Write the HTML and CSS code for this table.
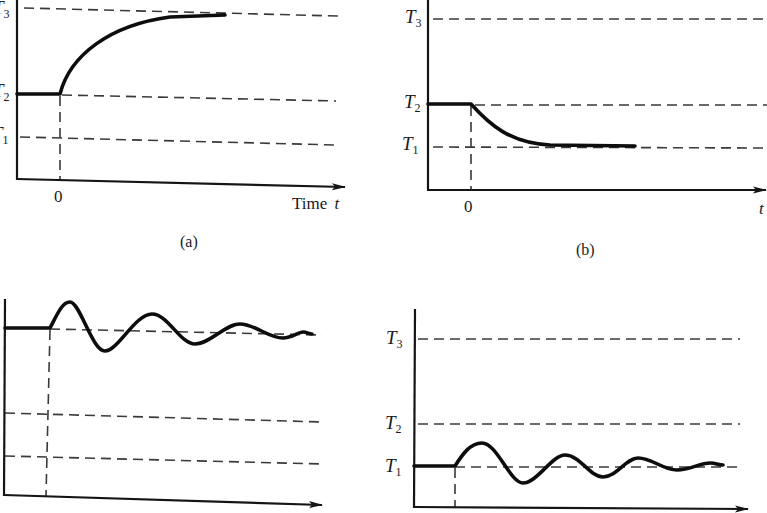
FILE: index.html
```
<!DOCTYPE html>
<html lang="en">
<head>
<meta charset="utf-8">
<title>Temperature response curves</title>
<link rel="stylesheet" href="styles.css">
</head>
<body>
<div class="figure">
<svg class="plot" viewBox="0 0 767 513" width="767" height="513" xmlns="http://www.w3.org/2000/svg">
  <defs>
    <marker id="arrow" markerWidth="14" markerHeight="8" refX="13" refY="4" orient="auto" markerUnits="userSpaceOnUse">
      <path d="M0,0.5 L14,4 L0,7.5 L3,4 Z" class="arrowhead"/>
    </marker>
  </defs>

  <!-- Panel (a) -->
  <g class="panel">
    <line class="dash" x1="24" y1="8" x2="338" y2="16"/>
    <line class="dash" x1="62" y1="95" x2="336" y2="101"/>
    <line class="dash" x1="20" y1="137" x2="336" y2="145"/>
    <line class="dash" x1="60" y1="96" x2="60" y2="179"/>
    <line class="axis" x1="17" y1="0" x2="17" y2="180"/>
    <line class="axis" x1="17" y1="179" x2="345" y2="187" marker-end="url(#arrow)"/>
    <path class="curve" d="M17,94 L60,94 C70,55 110,25 170,17 L225,15"/>
    <text class="lbl" x="-7" y="14">T<tspan class="sub" dy="4">3</tspan></text>
    <text class="lbl" x="-7" y="97">T<tspan class="sub" dy="4">2</tspan></text>
    <text class="lbl" x="-8" y="140">T<tspan class="sub" dy="4">1</tspan></text>
    <text class="num" x="54" y="202">0</text>
    <text class="num" x="292" y="209">Time <tspan class="it" dx="3">t</tspan></text>
    <text class="cap" x="180" y="247">(a)</text>
  </g>

  <!-- Panel (b) -->
  <g class="panel">
    <line class="dash" x1="433" y1="19" x2="767" y2="19"/>
    <line class="dash" x1="475" y1="105" x2="767" y2="105"/>
    <line class="dash" x1="433" y1="147" x2="767" y2="148"/>
    <line class="dash" x1="471" y1="106" x2="471" y2="190"/>
    <line class="axis" x1="428" y1="0" x2="428" y2="191"/>
    <line class="axis" x1="428" y1="190" x2="766" y2="190" marker-end="url(#arrow)"/>
    <path class="curve" d="M428,104 L471,104 C490,125 510,143 550,145 L635,146"/>
    <text class="lbl" x="405" y="23">T<tspan class="sub" dy="4">3</tspan></text>
    <text class="lbl" x="404" y="108">T<tspan class="sub" dy="4">2</tspan></text>
    <text class="lbl" x="402" y="150">T<tspan class="sub" dy="4">1</tspan></text>
    <text class="num" x="464" y="212">0</text>
    <text class="num it" x="759" y="214">t</text>
    <text class="cap" x="576" y="255">(b)</text>
  </g>

  <!-- Panel (c) -->
  <g class="panel">
    <line class="dash" x1="50" y1="329" x2="322" y2="335"/>
    <line class="dash" x1="5" y1="413" x2="322" y2="422"/>
    <line class="dash" x1="5" y1="456" x2="322" y2="464"/>
    <line class="dash" x1="50" y1="330" x2="46" y2="496"/>
    <line class="axis" x1="5" y1="299" x2="4" y2="496"/>
    <line class="axis" x1="4" y1="495" x2="322" y2="505" marker-end="url(#arrow)"/>
    <path class="curve" d="M5,328 L50,328 C57,315 62,302 70,302 C80,302 92,351 105,351 C118,351 135,314 152,314 C168,314 180,344 195,344 C210,344 225,324 240,324 C255,324 268,338 283,338 C292,338 298,332 303,332 C307,332 309,334 312,334"/>
    <text class="num" x="41" y="524">0</text>
  </g>

  <!-- Panel (d) -->
  <g class="panel">
    <line class="dash" x1="418" y1="339" x2="740" y2="339"/>
    <line class="dash" x1="418" y1="424" x2="740" y2="424"/>
    <line class="dash" x1="455" y1="467" x2="740" y2="467"/>
    <line class="dash" x1="455" y1="468" x2="455" y2="507"/>
    <line class="axis" x1="415" y1="309" x2="414" y2="508"/>
    <line class="axis" x1="414" y1="507" x2="748" y2="509" marker-end="url(#arrow)"/>
    <path class="curve" d="M414,466 L455,466 C462,455 470,443 482,443 C497,443 510,483 523,483 C537,483 552,455 565,455 C580,455 590,477 603,477 C617,477 626,458 638,458 C652,458 663,470 677,470 C690,470 700,463 710,463 C716,463 719,465 723,465"/>
    <text class="lbl" x="386" y="344">T<tspan class="sub" dy="4">3</tspan></text>
    <text class="lbl" x="385" y="429">T<tspan class="sub" dy="4">2</tspan></text>
    <text class="lbl" x="385" y="472">T<tspan class="sub" dy="4">1</tspan></text>
  </g>
</svg>
</div>
</body>
</html>
```
FILE: styles.css
```
html, body {
  margin: 0;
  padding: 0;
  background: #ffffff;
}

.figure {
  width: 767px;
  height: 513px;
  overflow: hidden;
}

.plot {
  display: block;
  font-family: "Liberation Serif", "DejaVu Serif", serif;
}

.axis {
  stroke: #151515;
  stroke-width: 2.2;
  fill: none;
}

.arrowhead {
  fill: #151515;
}

.dash {
  stroke: #3a3a3a;
  stroke-width: 1.6;
  stroke-dasharray: 10 6;
  fill: none;
}

.curve {
  stroke: #0d0d0d;
  stroke-width: 3.6;
  fill: none;
  stroke-linecap: round;
  stroke-linejoin: round;
}

.lbl {
  font-family: "Liberation Serif", "DejaVu Serif", serif;
  font-style: italic;
  font-size: 19px;
  fill: #1a1a1a;
}

.sub {
  font-style: normal;
  font-size: 12px;
}

.num {
  font-family: "Liberation Serif", "DejaVu Serif", serif;
  font-size: 17px;
  fill: #1a1a1a;
}

.it {
  font-style: italic;
}

.cap {
  font-family: "Liberation Serif", "DejaVu Serif", serif;
  font-size: 16px;
  fill: #222222;
}
```
